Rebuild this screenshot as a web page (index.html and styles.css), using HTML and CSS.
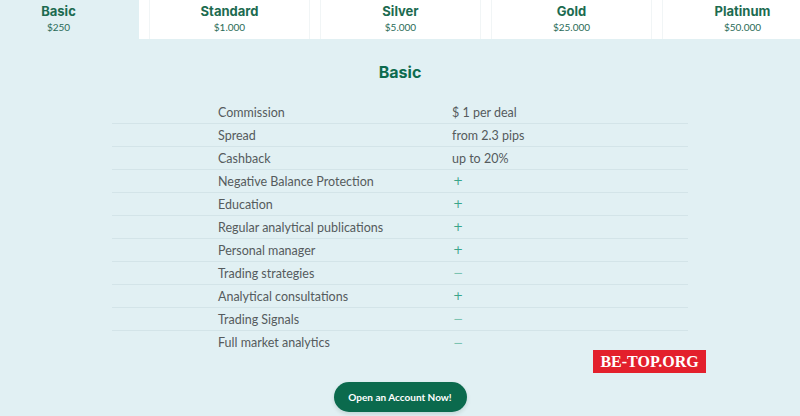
FILE: index.html
```html
<!DOCTYPE html>
<html lang="en">
<head>
    <meta charset="UTF-8">
    <meta name="viewport" content="width=device-width, initial-scale=1.0">
    <title>Account Types</title>
    <link rel="stylesheet" href="styles.css">
</head>
<body>
    <div class="tabs">
        <div class="tab active">
            <div class="tab-name">Basic</div>
            <div class="tab-price">$250</div>
        </div>
        <div class="tab">
            <div class="tab-name">Standard</div>
            <div class="tab-price">$1.000</div>
        </div>
        <div class="tab">
            <div class="tab-name">Silver</div>
            <div class="tab-price">$5.000</div>
        </div>
        <div class="tab">
            <div class="tab-name">Gold</div>
            <div class="tab-price">$25.000</div>
        </div>
        <div class="tab">
            <div class="tab-name">Platinum</div>
            <div class="tab-price">$50.000</div>
        </div>
    </div>

    <div class="content">
        <h2>Basic</h2>
        <div class="conditions">
            <div class="row"><span class="label">Commission</span><span class="value">$ 1 per deal</span></div>
            <div class="row"><span class="label">Spread</span><span class="value">from 2.3 pips</span></div>
            <div class="row"><span class="label">Cashback</span><span class="value">up to 20%</span></div>
            <div class="row"><span class="label">Negative Balance Protection</span><span class="value sign">+</span></div>
            <div class="row"><span class="label">Education</span><span class="value sign">+</span></div>
            <div class="row"><span class="label">Regular analytical publications</span><span class="value sign">+</span></div>
            <div class="row"><span class="label">Personal manager</span><span class="value sign">+</span></div>
            <div class="row"><span class="label">Trading strategies</span><span class="value sign minus">&minus;</span></div>
            <div class="row"><span class="label">Analytical consultations</span><span class="value sign">+</span></div>
            <div class="row"><span class="label">Trading Signals</span><span class="value sign minus">&minus;</span></div>
            <div class="row"><span class="label">Full market analytics</span><span class="value sign minus">&minus;</span></div>
        </div>
        <button class="open-btn">Open an Account Now!</button>
    </div>

    <div class="watermark">BE-TOP.ORG</div>
</body>
</html>
```

FILE: styles.css
```css
html, body {
    margin: 0;
    padding: 0;
}
body {
    background-color: #e1f0f3;
    color: #555b5d;
    font-family: Lato, "Noto Sans", sans-serif;
    width: 800px;
    height: 416px;
    overflow: hidden;
    position: relative;
}
.tabs {
    display: flex;
    gap: 10px;
    height: 39px;
    background-color: #fff;
    margin-left: -22px;
    width: 850px;
}
.tab {
    flex: 0 0 161px;
    box-sizing: border-box;
    border-left: 1px solid #f1f5f6;
    border-right: 1px solid #f1f5f6;
    text-align: center;
    padding-top: 3px;
}
.tab.active {
    background-color: #e1f0f3;
    border-color: #e1f0f3;
}
.tab-name {
    font-family: Inter, sans-serif;
    font-weight: 700;
    font-size: 13px;
    color: #1c6b50;
    line-height: 16px;
}
.tab-price {
    font-family: Lato, sans-serif;
    font-size: 10px;
    color: #2a6b58;
    margin-top: 2px;
}
.content {
    display: flex;
    flex-direction: column;
    align-items: center;
}
h2 {
    font-family: Inter, sans-serif;
    font-weight: 700;
    font-size: 16px;
    color: #0d6b4e;
    margin: 23px 0 0;
    line-height: 20px;
}
.conditions {
    width: 576px;
    margin-top: 19px;
}
.row {
    display: grid;
    grid-template-columns: 340px 1fr;
    height: 23px;
    align-items: center;
    border-bottom: 1px solid #d3e4e8;
    box-sizing: border-box;
    font-size: 12.5px;
}
.row:last-child {
    border-bottom: none;
}
.label {
    padding-left: 106px;
}
.sign {
    color: #3aa58a;
    font-family: "DejaVu Sans", sans-serif;
    font-size: 12px;
    padding-left: 1px;
}
.minus {
    color: #7cc3b1;
}
.open-btn {
    margin-top: 28px;
    width: 133px;
    height: 30px;
    border: none;
    border-radius: 15px;
    background-color: #0b6a4d;
    color: #fff;
    font-family: Lato, sans-serif;
    font-weight: 700;
    font-size: 10px;
    box-shadow: 0 2px 4px rgba(0, 60, 40, 0.15);
    cursor: pointer;
}
.watermark {
    position: absolute;
    left: 593px;
    top: 350px;
    width: 113px;
    height: 23px;
    background-color: #e3202c;
    color: #fff;
    font-family: "Liberation Serif", serif;
    font-weight: 700;
    font-size: 16px;
    line-height: 23px;
    text-align: center;
}
```
